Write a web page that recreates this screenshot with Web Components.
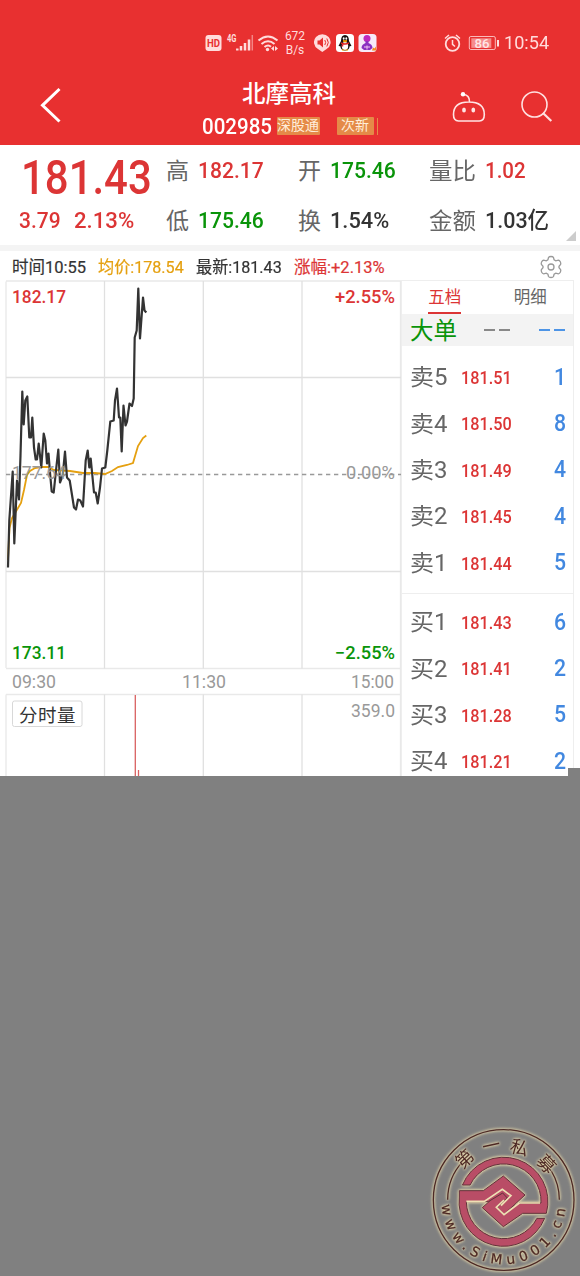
<!DOCTYPE html>
<html lang="zh">
<head>
<meta charset="utf-8">
<title>北摩高科 002985</title>
<style>
    body {
        margin: 0;
        width: 580px;
        height: 1276px;
        overflow: hidden;
        background: #808080;
        font-family: Roboto, "Noto Sans CJK SC", sans-serif;
        line-height: 1;
        color: #333;
    }
</style>
</head>
<body>
<stock-page></stock-page>

<script>
// Shared base: puts the markup of the subclass in an open shadow root
class BaseElement extends HTMLElement{
    constructor(){
        super();
        const template = document.createElement("template");
        template.innerHTML = this.getTemplate();
        this.attachShadow({ mode: "open" });
        this.shadowRoot.appendChild(template.content.cloneNode(true));
    }
}

// Squeezes or stretches its text to the width in the "w" attribute
class FitText extends BaseElement{
    connectedCallback(){
        const inner = this.shadowRoot.querySelector("span");
        const target = Number(this.getAttribute("w"));
        this.style.width = target + "px";
        const natural = inner.offsetWidth;
        if(natural > 0) inner.style.transform = "scaleX(" + target / natural + ")";
    }

    getTemplate(){
        return `
            <style>
                :host { display: inline-block; white-space: nowrap; flex: none; }
                span { display: inline-block; transform-origin: 0 50%; }
            </style>
            <span><slot></slot></span>
        `;
    }
}

class StatusBar extends BaseElement{
    getTemplate(){
        return `
            <style>
                :host { display: flex; align-items: center; height: 34px; padding: 26px 31px 0 205px; color: #ffdcdc; }
                svg { display: block; flex: none; }
                .speed { width: 24px; margin: 0 7px 0 3px; text-align: center; font-size: 12px; line-height: 14.5px; }
                .time { margin-left: 5px; padding-top: 1px; font-size: 18.5px; }
                .gap { flex: 1; }
            </style>
            <svg width="75" height="24" viewBox="0 0 75 24" fill="none" stroke="#ffdcdc">
                <rect x="0.5" y="4" width="16" height="16" rx="3" fill="#ffdcdc" stroke="none"/>
                <text x="2" y="15.9" font-size="10.5" font-weight="700" textLength="13" lengthAdjust="spacingAndGlyphs" fill="#e83030" stroke="none">HD</text>
                <text x="22" y="10.8" font-size="10" font-weight="700" textLength="9.500" lengthAdjust="spacingAndGlyphs" fill="#ffdcdc" stroke="none">4G</text>
                <path d="M32.300 17.500v2M36 15v4.500M40 12v7.500M44 8.500v11" stroke-width="2.500"/>
                <path d="M47.300 4v15.500" stroke-width="1.500" opacity=".5"/>
                <path d="M53.500 9.500q9.500-8 19 0M56.500 13q6.500-5.500 13 0M59.500 16q3.500-3 6.500-.3" stroke-width="2"/>
                <circle cx="62.500" cy="18.500" r="1.700" fill="#ffdcdc" stroke="none"/>
                <path d="M69 15l-3 2.500 3 2.500zM70 15l3 2.500-3 2.500z" fill="#ffdcdc" stroke="none"/>
            </svg>
            <div class="speed">672<br>B/s</div>
            <svg width="64" height="20" viewBox="0 0 64 20">
                <path d="M8.300 19L4 16A8.300 8 0 1 1 12.600 16z" fill="#ffdcdc"/>
                <path d="M3.500 7.500h2l3.500-3v10l-3.500-3h-2z" fill="#e83030"/>
                <path d="M10.800 7q1.700 2.500 0 5M12.800 5.500q3 4 0 8" fill="none" stroke="#e83030"/>
                <rect x="22" y="1" width="18" height="18" rx="3.500" fill="#fff"/>
                <path d="M27 8q0-6 4-6t4 6l2.500 5-1.800.2q-.7 4.300-4.700 4.300t-4.700-4.300L24.500 13z" fill="#181010"/>
                <ellipse cx="31" cy="13" rx="3.200" ry="4" fill="#fff"/>
                <ellipse cx="29.700" cy="5.500" rx=".9" ry="1.300" fill="#fff"/>
                <ellipse cx="32.300" cy="5.500" rx=".9" ry="1.300" fill="#fff"/>
                <path d="M29 7.800h4l-2 1.300zM28 17h2.500M31.500 17H34" fill="#fa0" stroke="#fa0"/>
                <path d="M27 10q4 2 8 0M28.500 10.500v3" fill="none" stroke="#d22" stroke-width="1.500"/>
                <rect x="44.500" y="1" width="18" height="18" rx="3.500" fill="#f7e9f8"/>
                <circle cx="53" cy="5.500" r="3.500" fill="#bd28bd"/>
                <path d="M51.500 8h3v2q4 1.500 4 5l-2.500 2h-6L47.500 15q0-3.500 4-5z" fill="#8b2fc0"/>
                <path d="M50 14h6M53 12.500v4" stroke="#f2c0f0"/>
                <path d="M58 17.500l1-3 1.500 1 1.500-2v4z" fill="#f48b20"/>
            </svg>
            <div class="gap"></div>
            <svg width="58" height="22" viewBox="0 0 58 22" fill="none" stroke="#ffdcdc">
                <circle cx="11.500" cy="12" r="6.800" stroke-width="1.800"/>
                <path d="M11.500 8v4.300l2.500 2.200M4 6.500l4-3.500M19 6.500l-4-3.500" stroke-width="1.500"/>
                <rect x="28.300" y="4.500" width="26" height="13" rx="1.500" opacity=".8"/>
                <rect x="30.300" y="6.300" width="20" height="9.600" fill="#f68c8c" stroke="none"/>
                <path d="M57 8v6.500" stroke-width="2"/>
                <text x="33.500" y="15.800" font-size="13.500" font-weight="500" textLength="15" lengthAdjust="spacingAndGlyphs" fill="#ffe6e6" stroke="none">86</text>
            </svg>
            <fit-text class="time" w="45">10:54</fit-text>
        `;
    }
}

class TitleBar extends BaseElement{
    getTemplate(){
        return `
            <style>
                :host { display: grid; grid-template-columns: 202px 176px 1fr; height: 85px; color: #fff; }
                svg { display: block; }
                .back { margin: 25px 0 0 36px; }
                .name { margin: 22.500px 0 0 40px; font-size: 23.500px; font-weight: 500; }
                .sub { display: flex; align-items: center; gap: 5px; height: 18px; margin-top: 11px; }
                .code { font-size: 22px; font-weight: 500; padding-top: 1px; }
                .tag { height: 17.500px; line-height: 17.500px; background: #e58a48; color: #ffeeda; font-size: 14px; overflow: hidden; border-radius: 1px; }
                .tag.first { width: 43px; }
                .tag.next { width: 37px; margin-left: 12px; text-align: center; }
                .edge { width: 1px; height: 17px; background: #e58a48; margin-left: -1.500px; }
                .tools { display: flex; gap: 32px; padding: 18px 0 0 73px; }
            </style>
            <svg class="back" width="28" height="40" viewBox="0 0 28 40">
                <path d="M23.500 4L6.500 20.300L23.500 36.500" fill="none" stroke="#fff" stroke-width="3"/>
            </svg>
            <div>
                <div class="name"><slot name="name"></slot></div>
                <div class="sub">
                    <fit-text class="code" w="70"><slot name="code"></slot></fit-text>
                    <div class="tag first"><fit-text w="42">深股通</fit-text></div>
                    <div class="tag next"><fit-text w="28">次新</fit-text></div>
                    <div class="edge"></div>
                </div>
            </div>
            <div class="tools">
                <svg width="38" height="46" viewBox="0 0 38 46" fill="none" stroke="#ffe4e4" stroke-width="1.600">
                    <path d="M17.800 24q15.500 0 15.500 12.500 0 6.500-5 6.500H7.500q-5 0-5-6.500Q2.500 24 17.800 24zM18.500 23.500q0-6.500-6-7"/>
                    <circle cx="12" cy="16.300" r="2.200" fill="#fff" stroke="none"/>
                    <ellipse cx="13" cy="32" rx="1.900" ry="2.500" fill="#ffe4e4" stroke="none"/>
                    <ellipse cx="22.300" cy="32" rx="1.900" ry="2.500" fill="#ffe4e4" stroke="none"/>
                </svg>
                <svg width="34" height="46" viewBox="0 0 34 46" fill="none" stroke="#ffe0e0" stroke-width="1.600">
                    <circle cx="13.500" cy="26.500" r="12.500"/>
                    <path d="M22 35l8.300 8" stroke-width="2.200"/>
                </svg>
            </div>
        `;
    }
}

// One label with its value, e.g. 高 182.17
class QuoteStat extends BaseElement{
    connectedCallback(){
        this.shadowRoot.querySelector("b").className = this.getAttribute("trend") || "";
    }

    getTemplate(){
        return `
            <style>
                :host { display: flex; align-items: center; gap: 8.500px; height: 50px; font-size: 23px; color: #666; }
                span { padding-top: 2px; }
                b { padding-top: 1px; font-size: 22.500px; font-weight: 500; color: #333; }
                .up { color: #dc3535; }
                .down { color: #099409; }
            </style>
            <span><slot name="label"></slot></span>
            <b><slot></slot></b>
        `;
    }
}

class QuotePanel extends BaseElement{
    getTemplate(){
        return `
            <style>
                :host { display: grid; grid-template-columns: 166px 132px 131px 1fr; height: 100px; background: #fff; border-bottom: 6px solid #f4f4f4; }
                .last { color: #dc3535; font-weight: 500; }
                .price { padding: 9px 0 0 21px; font-size: 48px; height: 48px; }
                .diff { display: flex; gap: 13px; padding: 7px 0 0 19px; font-size: 22.500px; }
                .corner { float: right; width: 0; height: 0; margin: -14px 4px 0 0; border-left: 10px solid transparent; border-bottom: 10px solid #ccc; }
            </style>
            <div class="last">
                <div class="price"><fit-text w="131">181.43</fit-text></div>
                <div class="diff"><fit-text w="42">3.79</fit-text><fit-text w="60">2.13%</fit-text></div>
            </div>
            <div>
                <quote-stat trend="up"><span slot="label">高</span><fit-text w="65.500">182.17</fit-text></quote-stat>
                <quote-stat trend="down"><span slot="label">低</span><fit-text w="65.500">175.46</fit-text></quote-stat>
            </div>
            <div>
                <quote-stat trend="down"><span slot="label">开</span><fit-text w="65.500">175.46</fit-text></quote-stat>
                <quote-stat><span slot="label">换</span><fit-text w="59">1.54%</fit-text></quote-stat>
            </div>
            <div>
                <quote-stat trend="up"><fit-text slot="label" w="47">量比</fit-text><fit-text w="41">1.02</fit-text></quote-stat>
                <quote-stat><fit-text slot="label" w="47">金额</fit-text><fit-text w="64">1.03亿</fit-text></quote-stat>
                <div class="corner"></div>
            </div>
        `;
    }
}

class ChartLegend extends BaseElement{
    getTemplate(){
        return `
            <style>
                :host { display: flex; align-items: center; height: 25px; padding: 4px 17px 0 12px; font-size: 16.500px; gap: 12px; }
                fit-text { padding-top: 2px; -webkit-text-stroke: .2px; }
                .avg { color: #e5a010; }
                .up { color: #dc3535; }
                svg { margin: -1px 0 0 auto; }
            </style>
            <fit-text w="74">时间10:55</fit-text>
            <fit-text w="86" class="avg">均价:178.54</fit-text>
            <fit-text w="86">最新:181.43</fit-text>
            <fit-text w="91" class="up">涨幅:+2.13%</fit-text>
            <svg width="24" height="24" viewBox="0 0 24 24" fill="none" stroke="#999" stroke-width="1.300">
                <path d="M9.500 2.500q.5-1 2.500-1t2.500 1l.6 2.300 1.700 1 2.500-.7q1.200.2 2 1.600t.3 2.700L20 11.200v1.600l1.600 1.800q.5 1.300-.3 2.700t-2 1.600l-2.500-.7-1.700 1-.6 2.300q-.5 1-2.500 1t-2.500-1l-.6-2.300-1.700-1-2.500.7q-1.200-.2-2-1.600t-.3-2.700L4 12.800v-1.600L2.400 9.400q-.5-1.300.3-2.700t2-1.600l2.500.7 1.700-1z"/>
                <circle cx="12" cy="12" r="3"/>
            </svg>
        `;
    }
}

// Minute line, its average, and the top of the volume chart under it
class MinuteChart extends BaseElement{
    connectedCallback(){
        const price = [
            8,567, 9.300,520, 12.700,471, 14.300,543, 17,480, 19,499, 20.500,455, 22.300,391, 23.700,424, 25.300,400,
            27.300,396, 29.300,437, 31,437, 32.300,417, 34,447, 35.700,459, 37,459, 38.700,443, 41.300,467,
            43.700,433, 45.300,440, 47,463, 48.500,453, 50,472, 51.700,491, 53.700,492, 56,470, 58.300,449,
            60,482, 62.700,475, 65,451, 67,477, 69.700,480, 74,507, 76,509, 78,499, 80.300,500, 83,506,
            85.700,460, 87.700,450, 89.300,467, 90.700,458, 94,492, 95.700,492, 97.700,503, 100,487, 102,468,
            105.300,467, 107.300,450, 110.300,421, 113.700,420, 115,400, 117,388, 119,417, 120.300,417,
            121.700,451, 123.500,405, 125.500,425, 127,421, 129.500,403, 132,405.500, 133.700,398, 134.700,337,
            136.700,330, 138.300,288, 140,338, 143,297, 144.500,310, 146.300,312
        ];
        const average = [
            8,560, 9.500,528, 12,518, 15,513, 18,508, 21,503, 24,490, 27,475, 30,471, 35,468, 41,467, 48,467,
            54,470, 70,471, 83,473, 95,473, 105,474, 112,471, 118,467, 127,465, 133,463, 138,446, 143,438, 146.300,435.500
        ];
        this.shadowRoot.getElementById("price").setAttribute("points", price.join(" "));
        this.shadowRoot.getElementById("average").setAttribute("points", average.join(" "));
    }

    getTemplate(){
        return `
            <style>
                :host { display: block; width: 401px; height: 496px; }
                svg { display: block; }
                text { font-size: 17.500px; }
                .up, .down { font-weight: 500; }
                .up { fill: #dc3535; }
                .down { fill: #099409; }
                .muted { fill: #999; }
            </style>
            <svg width="401" height="496" viewBox="0 280 401 496">
                <g fill="none" stroke="#e0e0e0" stroke-width="1.300">
                    <path d="M6 281.500V668M6 694.500V776M400.500 281V776M6 281h395M6 668.500h395M6 694.500h395" stroke="#e9e9e9"/>
                    <path d="M6 377.500h395M6 571.500h395M104.500 281v387.500M203.300 281v387.500M302 281v387.500M104.500 694.500V776M203.300 694.500V776M302 694.500V776"/>
                </g>
                <path d="M6 474.500h395" stroke="#999" stroke-width="1.300" stroke-dasharray="4.300 3.700"/>
                <polyline id="average" fill="none" stroke="#e5a010" stroke-width="1.800"/>
                <polyline id="price" fill="none" stroke="#333" stroke-width="2.200" stroke-linejoin="round" transform="translate(0 .5)"/>
                <g>
                    <text class="up" x="12" y="303" textLength="54" lengthAdjust="spacingAndGlyphs">182.17</text>
                    <text class="up" x="335" y="303" textLength="60" lengthAdjust="spacingAndGlyphs">+2.55%</text>
                    <text class="muted" x="12" y="479" textLength="54" lengthAdjust="spacingAndGlyphs">177.64</text>
                    <text class="muted" x="346" y="478.500" textLength="49" lengthAdjust="spacingAndGlyphs">0.00%</text>
                    <text class="down" x="12" y="659" textLength="54" lengthAdjust="spacingAndGlyphs">173.11</text>
                    <text class="down" x="335" y="659" textLength="60" lengthAdjust="spacingAndGlyphs">−2.55%</text>
                    <text class="muted" x="12" y="688" textLength="44" lengthAdjust="spacingAndGlyphs">09:30</text>
                    <text class="muted" x="182" y="688" textLength="44" lengthAdjust="spacingAndGlyphs">11:30</text>
                    <text class="muted" x="351" y="688" textLength="43" lengthAdjust="spacingAndGlyphs">15:00</text>
                    <text class="muted" x="351" y="717" textLength="44" lengthAdjust="spacingAndGlyphs">359.0</text>
                </g>
                <rect x="12.500" y="701" width="69.500" height="25.500" rx="2" fill="#fff" stroke="#d8d8d8"/>
                <text x="19" y="721.500" style="font-size:18.500px" fill="#333" textLength="56.500">分时量</text>
                <path d="M135.300 695V776" stroke="#d96060" stroke-width="1.300"/>
                <path d="M138.500 770V776" stroke="#d96060" stroke-width="1.300"/>
            </svg>
        `;
    }
}

class OrderRow extends BaseElement{
    getTemplate(){
        return `
            <style>
                :host { display: flex; align-items: center; height: 46.400px; padding: 0 7px 0 8px; color: #666; }
                .side { padding-top: 2px; font-size: 23px; }
                .price { margin-left: 13px; padding-top: 4px; font-size: 17.500px; font-weight: 500; color: #dc3535; }
                .amount { margin-left: auto; padding-top: 1px; font-size: 23px; font-weight: 500; color: #4288e0; }
            </style>
            <fit-text class="side" w="37.500"><slot name="side"></slot></fit-text>
            <fit-text class="price" w="51"><slot></slot></fit-text>
            <fit-text class="amount" w="12"><slot name="amount"></slot></fit-text>
        `;
    }
}

class OrderBook extends BaseElement{
    connectedCallback(){
        this.fill("sell", [["卖5", "181.51", 1], ["卖4", "181.50", 8], ["卖3", "181.49", 4], ["卖2", "181.45", 4], ["卖1", "181.44", 5]]);
        this.fill("buy", [["买1", "181.43", 6], ["买2", "181.41", 2], ["买3", "181.28", 5], ["买4", "181.21", 2]]);
    }

    fill(id, rows){
        this.shadowRoot.getElementById(id).innerHTML = rows.map(([side, price, amount]) =>
            `<order-row><span slot="side">${side}</span>${price}<span slot="amount">${amount}</span></order-row>`
        ).join("");
    }

    getTemplate(){
        return `
            <style>
                :host { display: block; box-sizing: border-box; width: 173px; height: 496px; overflow: hidden; border: 1px solid #eee; border-bottom: none; }
                .tabs { display: grid; grid-template-columns: 1fr 1fr; height: 33px; text-align: center; font-size: 16.500px; color: #666; }
                .tabs span { box-sizing: border-box; height: 33px; padding-top: 9px; justify-self: center; }
                .tabs .active { color: #dc3535; border-bottom: 2px solid #dc3535; }
                .big { display: flex; align-items: center; height: 32px; padding: 0 8px; background: #f3f3f3; font-size: 23.500px; }
                .big .name { padding-top: 3px; color: #099409; }
                .dash { width: 11px; height: 2px; background: #888; margin-right: 4px; }
                .dash.first { margin-left: 27px; }
                .dash.blue { background: #4d94e6; }
                .dash.blue.first { margin-left: auto; }
                .dash.blue.end { margin-right: 0; }
                #sell { padding-top: 7.500px; height: 239px; border-bottom: 1px solid #eee; }
                #buy { padding-top: 5px; }
            </style>
            <div class="tabs"><span class="active">五档</span><span>明细</span></div>
            <div class="big">
                <span class="name">大单</span>
                <div class="dash first"></div><div class="dash"></div>
                <div class="dash blue first"></div><div class="dash blue end"></div>
            </div>
            <div id="sell"></div>
            <div id="buy"></div>
        `;
    }
}

class SealMark extends BaseElement{
    getTemplate(){
        return `
            <style>
                :host { position: absolute; left: 420px; top: 1115px; }
                svg { display: block; overflow: visible; }
                .glow { filter: drop-shadow(0 0 4px #e6d8ac) drop-shadow(0 0 3px #d8cba4); }
            </style>
            <svg width="160" height="161" viewBox="0 0 480 483">
                <g class="glow" fill="none" stroke="#4d2925" stroke-width="4">
                    <circle cx="251" cy="255" r="211"/>
                    <path d="M83 254A168 168 0 0 1 128 140M418 254A168 168 0 0 0 394 168"/>
                </g>
                <g class="glow" fill="#4d2925" font-size="54" text-anchor="middle">
                    <text transform="translate(134 132) rotate(-43)" y="19">第</text>
                    <text transform="translate(214 92) rotate(-12)" y="19">一</text>
                    <text transform="translate(298 98) rotate(15)" y="19">私</text>
                    <text transform="translate(379 147) rotate(46)" y="19">募</text>
                </g>
                <path id="ring" d="M65 262A186 186 0 0 0 437 262" fill="none"/>
                <text class="glow" fill="#4d2925" stroke="#4d2925" stroke-width=".8" font-size="41" font-family="DejaVu Sans" textLength="556"><textPath href="#ring" startOffset="8">www.SiMu001.cn</textPath></text>
                <g class="glow" fill="#b94d66" stroke="#62323a" stroke-width="3">
                    <path d="M127.400 210A133 133 0 0 1 379 295H308L250 335L187 278L247 224L271 243L235 273L252 291L298 264H363A112 112 0 0 0 150.300 210Z"/>
                    <path d="M373.800 310A133 133 0 0 1 118 246V227H190L250 183L315 240L252 298L231 279L262 249L248 234L205 260H139A112 112 0 0 0 350.700 310Z"/>
                </g>
                <path d="M139 259H193L247 223L273 242L243 272M298 264L252 299L229 277L252 255M298 264H360" fill="none" stroke="#eee0b4" stroke-width="5"/>
            </svg>
        `;
    }
}

class StockPage extends BaseElement{
    getTemplate(){
        return `
            <style>
                :host { display: block; }
                header { height: 145px; background: #e83030; }
                main { display: grid; grid-template-columns: 401px 179px; height: 496px; background: #fff; }
                .legend { background: #fff; }
                aside { display: flex; justify-content: space-between; }
                .notch { align-self: flex-end; width: 12px; height: 8px; margin-left: -6px; background: #808080; z-index: 1; flex: none; }
            </style>
            <header>
                <status-bar></status-bar>
                <title-bar><span slot="name">北摩高科</span><span slot="code">002985</span></title-bar>
            </header>
            <quote-panel></quote-panel>
            <div class="legend"><chart-legend></chart-legend></div>
            <main>
                <minute-chart></minute-chart>
                <aside><order-book></order-book><div class="notch"></div></aside>
            </main>
            <seal-mark></seal-mark>
        `;
    }
}

customElements.define("fit-text", FitText);
customElements.define("status-bar", StatusBar);
customElements.define("title-bar", TitleBar);
customElements.define("quote-stat", QuoteStat);
customElements.define("quote-panel", QuotePanel);
customElements.define("chart-legend", ChartLegend);
customElements.define("minute-chart", MinuteChart);
customElements.define("order-row", OrderRow);
customElements.define("order-book", OrderBook);
customElements.define("seal-mark", SealMark);
customElements.define("stock-page", StockPage);
</script>
</body>
</html>
